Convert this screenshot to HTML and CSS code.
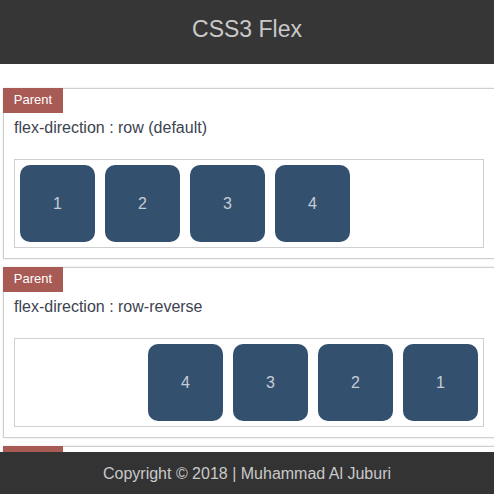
FILE: index.html
```html
<!DOCTYPE html>
<html lang="en">
<head>
    <meta charset="UTF-8">
    <meta name="viewport" content="width=device-width, initial-scale=1.0">
    <title>CSS3 Flex</title>
    <link rel="stylesheet" href="styles.css">
</head>
<body>
    <header class="top-bar">CSS3 Flex</header>

    <div class="content">
        <div class="demo">
            <div class="badge">Parent</div>
            <div class="demo-title">flex-direction : row (default)</div>
            <div class="parent row">
                <div class="child">1</div>
                <div class="child">2</div>
                <div class="child">3</div>
                <div class="child">4</div>
            </div>
        </div>

        <div class="demo">
            <div class="badge">Parent</div>
            <div class="demo-title">flex-direction : row-reverse</div>
            <div class="parent row-reverse">
                <div class="child">1</div>
                <div class="child">2</div>
                <div class="child">3</div>
                <div class="child">4</div>
            </div>
        </div>

        <div class="demo">
            <div class="badge">Parent</div>
            <div class="demo-title">flex-direction : column</div>
            <div class="parent column">
                <div class="child">1</div>
                <div class="child">2</div>
                <div class="child">3</div>
                <div class="child">4</div>
            </div>
        </div>
    </div>

    <footer class="bottom-bar">Copyright &copy; 2018 | Muhammad Al Juburi</footer>
</body>
</html>
```

FILE: styles.css
```css
body, html {
    margin: 0;
    font-family: 'Liberation Sans', Arial, sans-serif;
    background-color: #fff;
    color: #3d4350;
    overflow-x: hidden;
}
.top-bar {
    height: 64px;
    line-height: 58px;
    background-color: #363636;
    color: #c9c9c9;
    font-size: 23px;
    text-align: center;
}
.content {
    padding-top: 24px;
    padding-bottom: 60px;
}
.demo {
    margin: 0 -1px 8px 3px;
    padding: 0 10px 10px;
    border: 1px solid #cfcfcf;
    box-shadow: 0 0 2px rgba(0, 0, 0, 0.12);
    background-color: #fff;
}
.badge {
    display: inline-block;
    height: 25px;
    line-height: 23px;
    width: 60px;
    margin: -1px 0 0 -11px;
    background-color: #a85a55;
    color: #fff;
    font-size: 13px;
    text-align: center;
    box-sizing: border-box;
    vertical-align: top;
}
.demo-title {
    margin-top: 5px;
    font-size: 16px;
    line-height: 20px;
}
.parent {
    display: flex;
    margin-top: 21px;
    padding: 5px 0;
    border: 1px solid #cfcfcf;
}
.row {
    flex-direction: row;
}
.row-reverse {
    flex-direction: row-reverse;
}
.column {
    flex-direction: column;
}
.child {
    display: flex;
    align-items: center;
    justify-content: center;
    width: 75px;
    height: 77px;
    margin: 0 5px;
    border-radius: 10px;
    background-color: #34506f;
    color: #c5ccd6;
    font-size: 16px;
}
.column .child {
    margin: 5px;
}
.bottom-bar {
    position: fixed;
    left: 0;
    right: 0;
    bottom: 0;
    height: 42px;
    line-height: 44px;
    background-color: #333;
    color: #c9c9c9;
    font-size: 16px;
    text-align: center;
}
```
